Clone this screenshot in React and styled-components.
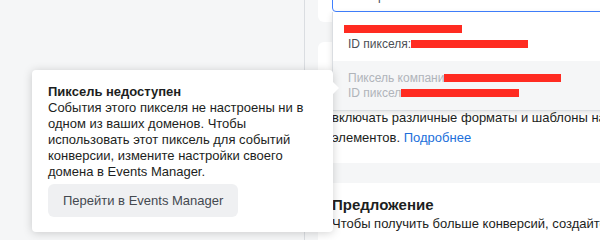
import styled, { createGlobalStyle } from 'styled-components'

const GlobalStyle = createGlobalStyle`
  html, body {
    margin: 0;
    padding: 0;
  }
  body {
    font-family: "Liberation Sans", Arial, sans-serif;
    background: #f5f6f7;
  }
`

const Page = styled.div`
  position: relative;
  display: flex;
  width: 600px;
  height: 240px;
  overflow: hidden;
  background: #f5f6f7;
  color: #1c1e21;
`

const Sidebar = styled.div`
  flex: none;
  width: 304px;
  border-right: 1px solid #dadde1;
`

const Column = styled.div`
  flex: none;
  width: 340px;
  margin-top: -32px;
  padding-left: 13px;
  display: flex;
  flex-direction: column;
  gap: 20px;
`

const Card = styled.section`
  position: relative;
  background: #fff;
  border-radius: 6px;
  padding: ${p => p.$pad};
`

const SelectBox = styled.div`
  box-sizing: border-box;
  height: 32px;
  display: flex;
  align-items: center;
  padding: 0 15px;
  border: 1px solid #4080ff;
  border-radius: 4px;
  font-size: 12px;
  color: #4b4f56;
`

const Menu = styled.ul`
  position: absolute;
  left: 14px;
  top: 44px;
  z-index: 2;
  width: 320px;
  margin: 0;
  padding: 0;
  list-style: none;
  background: #fff;
  border: 1px solid #dadde1;
  border-top: none;
  box-shadow: 0 2px 6px rgba(0, 0, 0, 0.12);
`

const MenuItem = styled.li`
  padding: 10px 15px 9px;
  font-size: 12px;
  line-height: 15px;
  white-space: nowrap;
  background: ${p => (p.$disabled ? '#f5f6f7' : '#fff')};
  color: ${p => (p.$disabled ? '#b0b4ba' : '#4b4f56')};
`

const Line = styled.div``

const Redacted = styled.span`
  display: inline-block;
  vertical-align: baseline;
  width: ${p => p.$w}px;
  height: 8px;
  margin-left: ${p => p.$shift || 0}px;
  background: #ff2b21;
`

const Text = styled.p`
  margin: 0;
  font-size: 13px;
  line-height: 20px;
  white-space: nowrap;
`

const More = styled.a`
  color: #216fdb;
  text-decoration: none;
`

const Heading = styled.h3`
  margin: 0;
  font-size: 15px;
  line-height: 18px;
  font-weight: 700;
`

const Tooltip = styled.div`
  position: absolute;
  left: 32px;
  top: 70px;
  z-index: 5;
  box-sizing: border-box;
  width: 301px;
  padding: 14px 16px 15px;
  background: #fff;
  border-radius: 4px;
  box-shadow: 0 1px 10px rgba(0, 0, 0, 0.18);
  font-size: 13px;
  line-height: 16px;

  &::after {
    content: '';
    position: absolute;
    right: -6px;
    top: 12px;
    border-left: 6px solid #fff;
    border-top: 6px solid transparent;
    border-bottom: 6px solid transparent;
  }
`

const TipTitle = styled.div`
  font-weight: 700;
`

const TipText = styled.div``

const TipButton = styled.button`
  display: block;
  height: 33px;
  margin-top: 4px;
  padding: 0 15px;
  border: none;
  border-radius: 6px;
  background: #eff0f2;
  color: #444950;
  font-family: inherit;
  font-size: 13px;
  cursor: pointer;
`

export default function App() {
  return (
    <>
      <GlobalStyle />
      <Page>
        <Sidebar />
        <Column>
          <Card $pad="12px 14px 10px">
            <SelectBox>Выберите пиксель</SelectBox>
            <Menu>
              <MenuItem>
                <Line>
                  <Redacted $w={118} $shift={-4} />
                </Line>
                <Line>
                  ID пикселя:<Redacted $w={117} />
                </Line>
              </MenuItem>
              <MenuItem $disabled>
                <Line>
                  Пиксель компани<Redacted $w={117} />
                </Line>
                <Line>
                  ID пиксел<Redacted $w={118} />
                </Line>
              </MenuItem>
            </Menu>
          </Card>
          <Card $pad="66px 14px 15px">
            <Text>
              включать различные форматы и шаблоны на нескольких
              <br />
              элементов. <More href="#">Подробнее</More>
            </Text>
          </Card>
          <Card $pad="13px 14px 20px">
            <Heading>Предложение</Heading>
            <Text>Чтобы получить больше конверсий, создайте предложение</Text>
          </Card>
        </Column>
        <Tooltip>
          <TipTitle>Пиксель недоступен</TipTitle>
          <TipText>
            События этого пикселя не настроены ни в одном из ваших доменов.
            Чтобы использовать этот пиксель для событий конверсии, измените
            настройки своего домена в Events Manager.
          </TipText>
          <TipButton>Перейти в Events Manager</TipButton>
        </Tooltip>
      </Page>
    </>
  )
}
